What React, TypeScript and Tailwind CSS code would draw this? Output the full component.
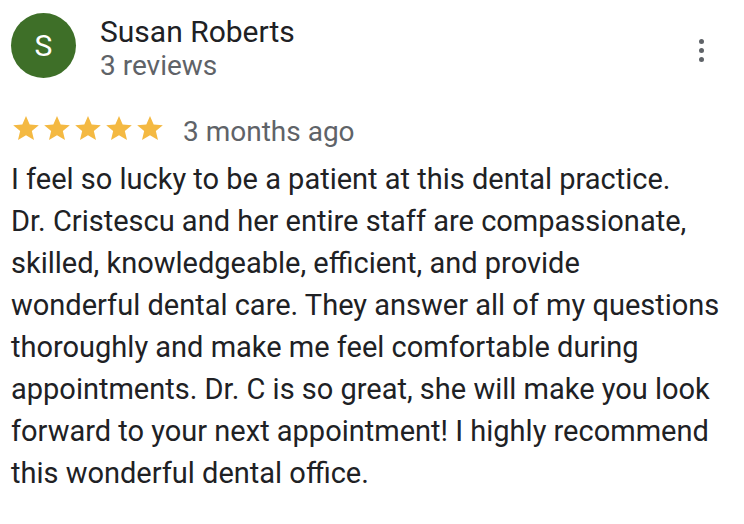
import React from "react";

const Star = () => (
  <svg width="26" height="24" viewBox="1.9 2.2 20.2 18.9" className="shrink-0 block">
    <path
      fill="#f4b942"
      d="M12 2.2l2.9 6.6 7.2.6-5.5 4.7 1.7 7-6.3-3.8-6.3 3.8 1.7-7L1.9 9.4l7.2-.6z"
    />
  </svg>
);

const lines = [
  "I feel so lucky to be a patient at this dental practice.",
  "Dr. Cristescu and her entire staff are compassionate,",
  "skilled, knowledgeable, efficient, and provide",
  "wonderful dental care. They answer all of my questions",
  "thoroughly and make me feel comfortable during",
  "appointments. Dr. C is so great, she will make you look",
  "forward to your next appointment! I highly recommend",
  "this wonderful dental office.",
];

export default function App() {
  return (
    <div
      className="w-[744px] h-[524px] bg-white overflow-hidden"
      style={{ fontFamily: "Roboto, 'Liberation Sans', sans-serif" }}
    >
      <div className="flex items-start pl-[11px] pr-[40px] pt-[13px]">
        <div className="w-[65px] h-[65px] rounded-full bg-[#3e6f28] flex items-center justify-center text-white text-[30px] shrink-0">
          S
        </div>
        <div className="ml-[24px] flex-1 mt-[2px]">
          <div className="text-[30px] leading-[34px] text-[#202124]">Susan Roberts</div>
          <div className="text-[28px] leading-[34px] text-[#5f6368]">3 reviews</div>
        </div>
        <div className="flex flex-col gap-[4px] mt-[26px]">
          <span className="block w-[5px] h-[5px] rounded-full bg-[#5f6368]" />
          <span className="block w-[5px] h-[5px] rounded-full bg-[#5f6368]" />
          <span className="block w-[5px] h-[5px] rounded-full bg-[#5f6368]" />
        </div>
      </div>
      <div className="flex items-start pl-[13px] mt-[34px]">
        <div className="flex gap-[5px] mt-[-1px]">
          <Star />
          <Star />
          <Star />
          <Star />
          <Star />
        </div>
        <span className="ml-[20px] text-[28px] leading-[30px] text-[#5f6368]">3 months ago</span>
      </div>
      <div className="pl-[11px] mt-[11px] text-[29px] leading-[42px] text-[#202124]">
        {lines.map((l) => (
          <div key={l} className="whitespace-nowrap">
            {l}
          </div>
        ))}
      </div>
    </div>
  );
}
